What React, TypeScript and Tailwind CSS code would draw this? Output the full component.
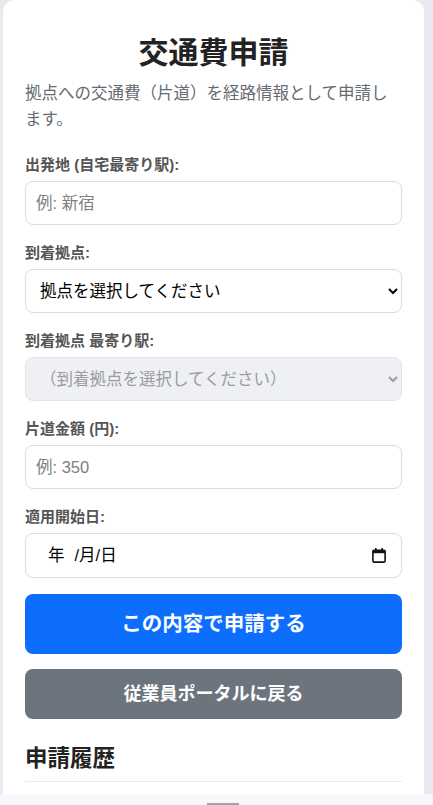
import React from 'react';

const font = { fontFamily: '"Liberation Sans", "Noto Sans CJK JP", sans-serif' };

function Field({ label, children }: { label: string; children: React.ReactNode }) {
  return (
    <div className="mb-[17px]">
      <label className="block text-[15px] font-bold leading-[21px] text-[#555] mb-[6px]">{label}</label>
      {children}
    </div>
  );
}

export default function App() {
  return (
    <div className="min-h-[805px] bg-[#e9eaef]" style={font}>
      <div className="ml-[3px] w-[421px] bg-white rounded-t-[12px] px-[22px] pt-[35px] pb-[30px]">
        <h1 className="text-center text-[30px] font-bold leading-[36px] text-[#222]">交通費申請</h1>
        <p className="mt-[9px] text-[16.5px] leading-[26px] text-[#666b73]">
          拠点への交通費（片道）を経路情報として申請します。
        </p>

        <div className="mt-[22px]">
          <Field label="出発地 (自宅最寄り駅):">
            <input
              type="text"
              placeholder="例: 新宿"
              className="block w-full h-[44px] px-[10px] border border-[#dcdcdc] rounded-[8px] text-[16.5px] placeholder:text-[#808080] outline-none"
            />
          </Field>

          <Field label="到着拠点:">
            <select className="block w-full h-[44px] pl-[10px] pr-[14px] border border-[#dcdcdc] rounded-[8px] text-[16.5px] text-black bg-white">
              <option>拠点を選択してください</option>
            </select>
          </Field>

          <Field label="到着拠点 最寄り駅:">
            <select
              disabled
              className="block w-full h-[44px] pl-[10px] pr-[14px] border border-[#e2e4e7] rounded-[8px] text-[16.5px] text-[#9a9ca0] bg-[#eef0f3]"
            >
              <option>（到着拠点を選択してください）</option>
            </select>
          </Field>

          <Field label="片道金額 (円):">
            <input
              type="text"
              placeholder="例: 350"
              className="block w-full h-[44px] px-[10px] border border-[#dcdcdc] rounded-[8px] text-[16.5px] placeholder:text-[#808080] outline-none"
            />
          </Field>

          <Field label="適用開始日:">
            <div className="flex items-center justify-between w-full h-[45px] pl-[22px] pr-[15px] border border-[#dcdcdc] rounded-[8px] text-[16.5px] text-black">
              <span>
                年<span className="ml-[10px]">/月/日</span>
              </span>
              <svg width="14" height="15" viewBox="0 0 14 15" aria-hidden="true">
                <rect x="3" y="0" width="1.6" height="3" fill="#111" />
                <rect x="9.4" y="0" width="1.6" height="3" fill="#111" />
                <rect x="0.9" y="2.2" width="12.2" height="11.9" rx="1" fill="none" stroke="#111" strokeWidth="1.6" />
                <rect x="0.9" y="2.2" width="12.2" height="3" fill="#111" />
              </svg>
            </div>
          </Field>
        </div>

        <button className="block w-full h-[60px] -mt-[1px] rounded-[8px] bg-[#0d6efd] text-white text-[20.5px] font-bold">
          この内容で申請する
        </button>
        <button className="block w-full h-[50px] mt-[15px] rounded-[8px] bg-[#6c757d] text-white text-[18px] font-bold">
          従業員ポータルに戻る
        </button>

        <h2 className="mt-[25px] pb-[8px] border-b border-[#ececec] text-[22.5px] font-bold leading-[29px] text-[#222]">
          申請履歴
        </h2>
      </div>

      <div className="fixed bottom-0 left-0 right-0 h-[11px] bg-[#f7f8fc]">
        <div className="mt-[9px] ml-[207px] w-[32px] h-[2px] bg-[#a3a3a3]" />
      </div>
    </div>
  );
}
